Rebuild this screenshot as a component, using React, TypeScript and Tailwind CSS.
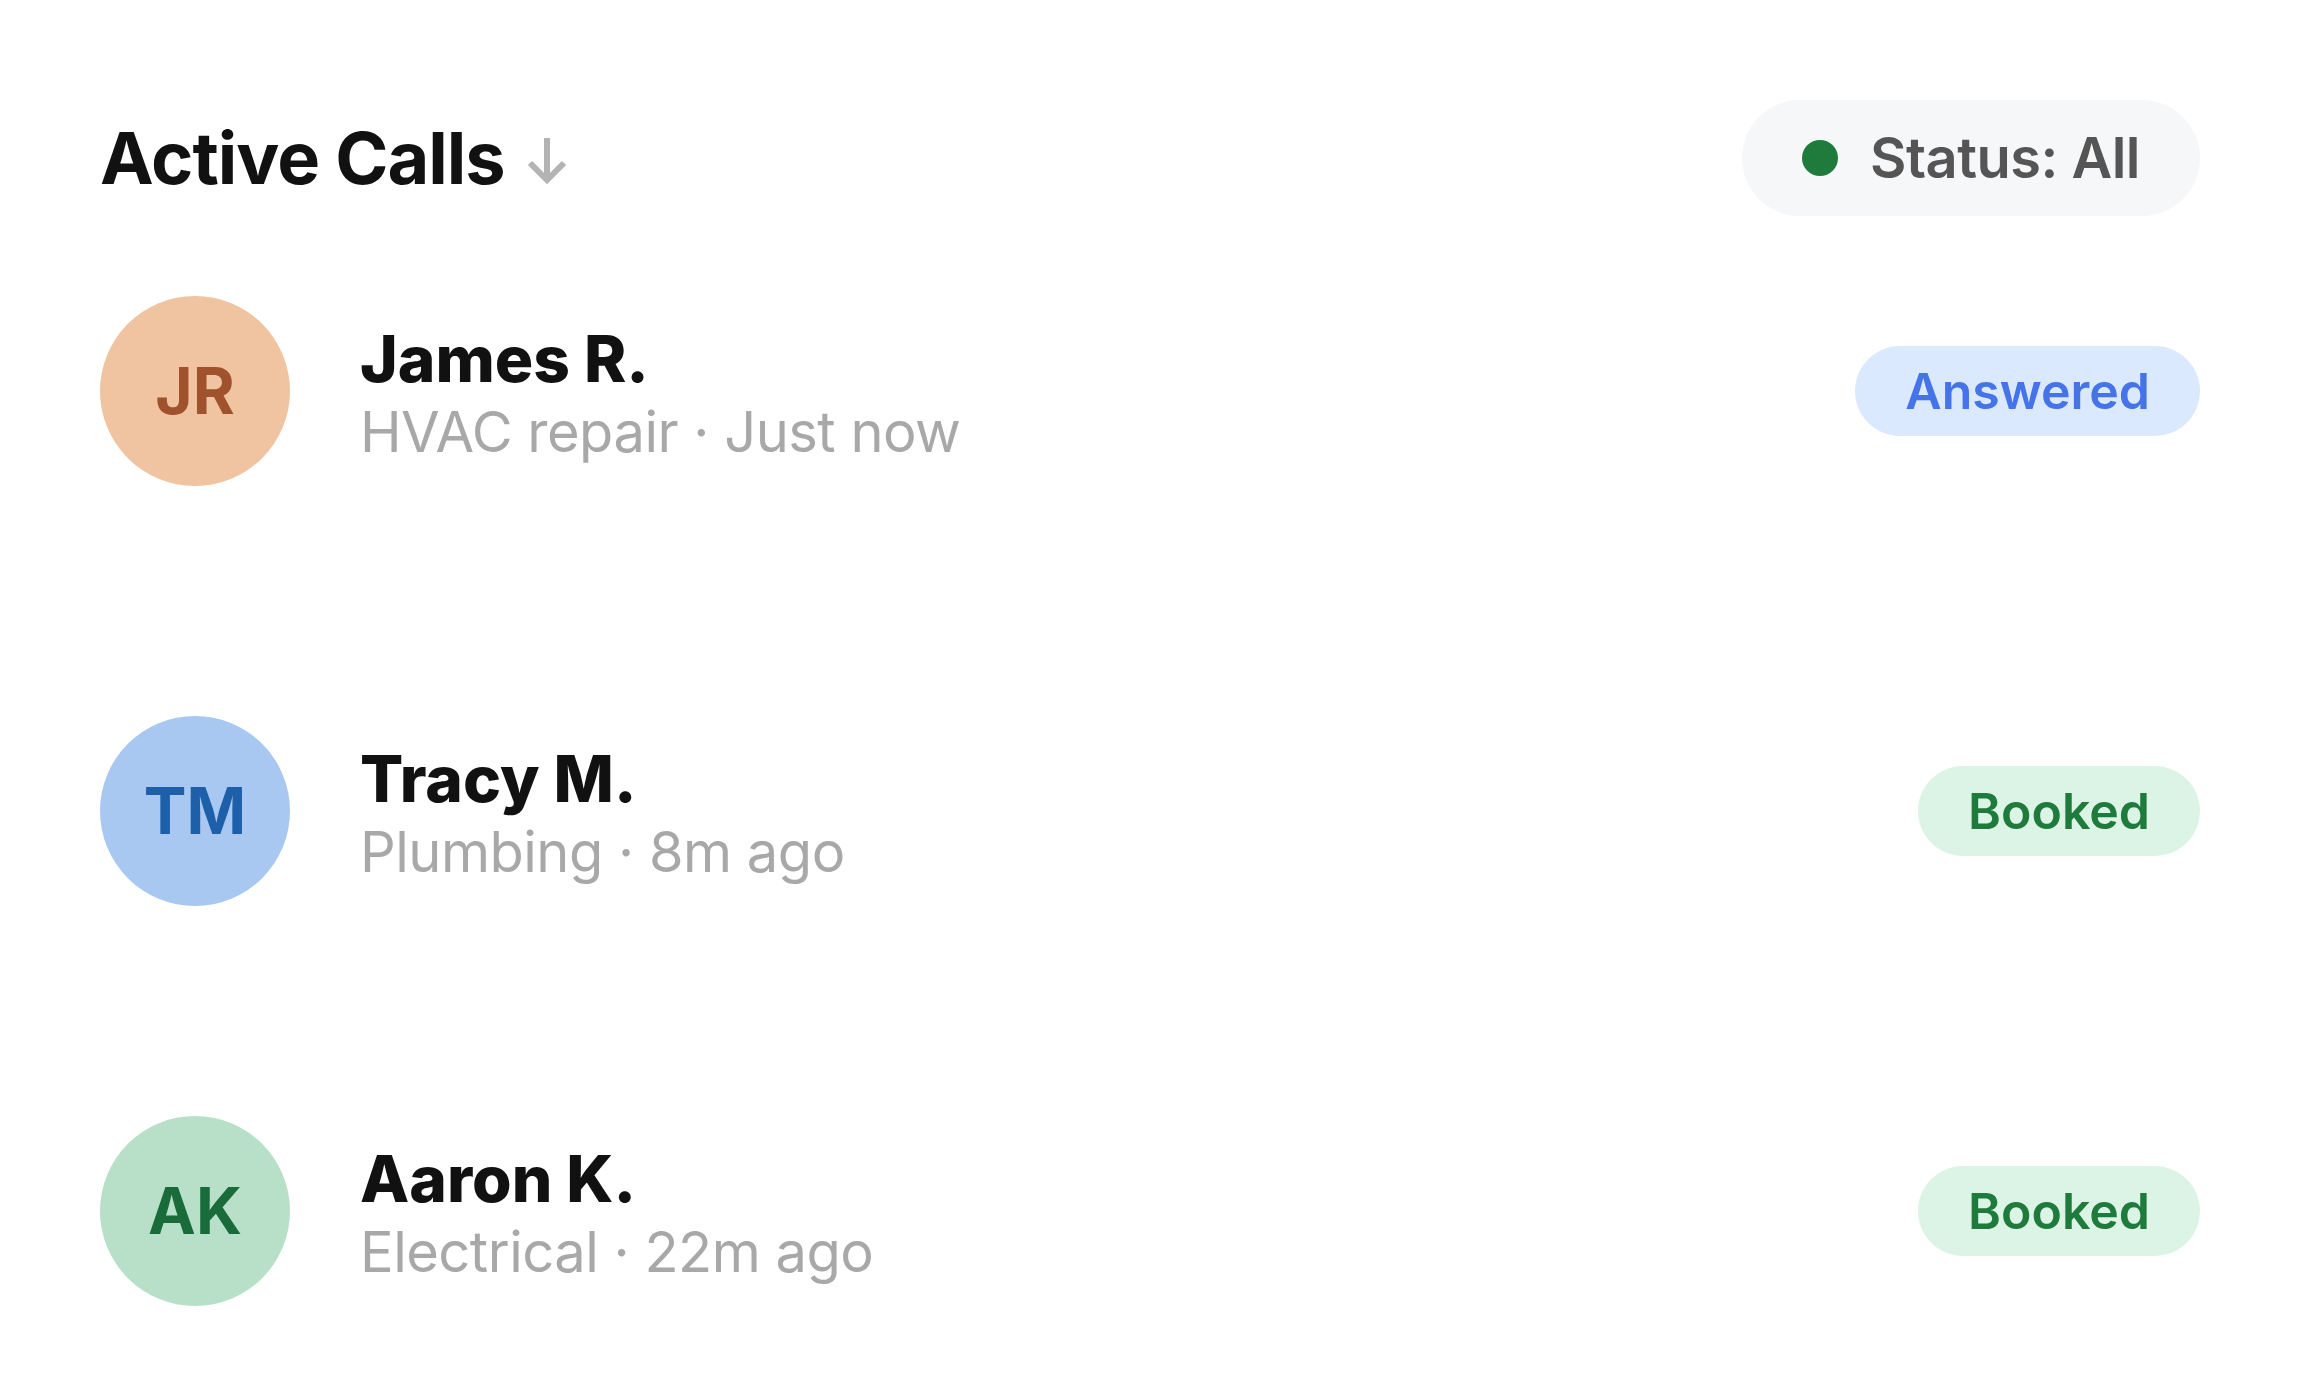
import React from 'react';

// Active calls list

type CallStatus = 'Answered' | 'Booked';

interface Call {
  initials: string;
  name: string;
  service: string;
  time: string;
  status: CallStatus;
  avatar: string;
  spacing: string;
}

const CALLS: Call[] = [
  {
    initials: 'JR',
    name: 'James R.',
    service: 'HVAC repair',
    time: 'Just now',
    status: 'Answered',
    avatar: 'bg-[#f0c4a0] text-[#a0522d]',
    spacing: 'mt-[80px]',
  },
  {
    initials: 'TM',
    name: 'Tracy M.',
    service: 'Plumbing',
    time: '8m ago',
    status: 'Booked',
    avatar: 'bg-[#a8c8f1] text-[#1d5fa9]',
    spacing: 'mt-[230px]',
  },
  {
    initials: 'AK',
    name: 'Aaron K.',
    service: 'Electrical',
    time: '22m ago',
    status: 'Booked',
    avatar: 'bg-[#b8e0c9] text-[#1a6b3a]',
    spacing: 'mt-[210px]',
  },
];

const STATUS_STYLE: Record<CallStatus, string> = {
  Answered: 'bg-[#dbe9fe] text-[#4573e8]',
  Booked: 'bg-[#dcf4e6] text-[#1e7b3c]',
};

const SortArrow = () => (
  <svg width="40" height="46" viewBox="0 0 40 46" fill="none" className="ml-[22px] mt-[6px]">
    <line x1="20" y1="0" x2="20" y2="43" stroke="#b3b3b3" strokeWidth="6" />
    <polyline points="3,25 20,42 37,25" stroke="#b3b3b3" strokeWidth="6" fill="none" />
  </svg>
);

const CallRow: React.FC<{ call: Call }> = ({ call }) => (
  <div className={`flex items-center ${call.spacing}`}>
    <div
      className={`w-[190px] h-[190px] shrink-0 rounded-full flex items-center justify-center text-[64px] font-bold ${call.avatar}`}
    >
      {call.initials}
    </div>
    <div className="ml-[70px] pt-[10px] flex flex-col">
      <span className="text-[64px] leading-[77px] font-extrabold text-[#111111]">{call.name}</span>
      <span className="-mt-[4px] text-[56px] leading-[79px] tracking-[-0.5px] text-[#a8a8a8]">
        {call.service} · {call.time}
      </span>
    </div>
    <span
      className={`ml-auto h-[90px] px-[50px] rounded-full flex items-center text-[50px] font-semibold ${STATUS_STYLE[call.status]}`}
    >
      {call.status}
    </span>
  </div>
);

export default function App() {
  return (
    <div
      className="w-full min-h-screen bg-white px-[100px] pt-[100px]"
      style={{ fontFamily: 'Inter, "Noto Sans", sans-serif' }}
    >
      {/* Header */}
      <div className="flex items-center justify-between h-[116px]">
        <div className="flex items-center">
          <h1 className="text-[72px] leading-none font-bold tracking-[-1px] text-[#111111]">Active Calls</h1>
          <SortArrow />
        </div>
        <button className="h-[116px] px-[60px] rounded-full bg-[#f6f7f9] flex items-center gap-[32px]">
          <span className="w-[36px] h-[36px] rounded-full bg-[#1e7b3c]" />
          <span className="text-[56px] font-semibold tracking-[-0.5px] text-[#555555]">Status: All</span>
        </button>
      </div>

      {/* Rows */}
      <div className="flex flex-col">
        {CALLS.map(call => (
          <CallRow key={call.name} call={call} />
        ))}
      </div>
    </div>
  );
}
